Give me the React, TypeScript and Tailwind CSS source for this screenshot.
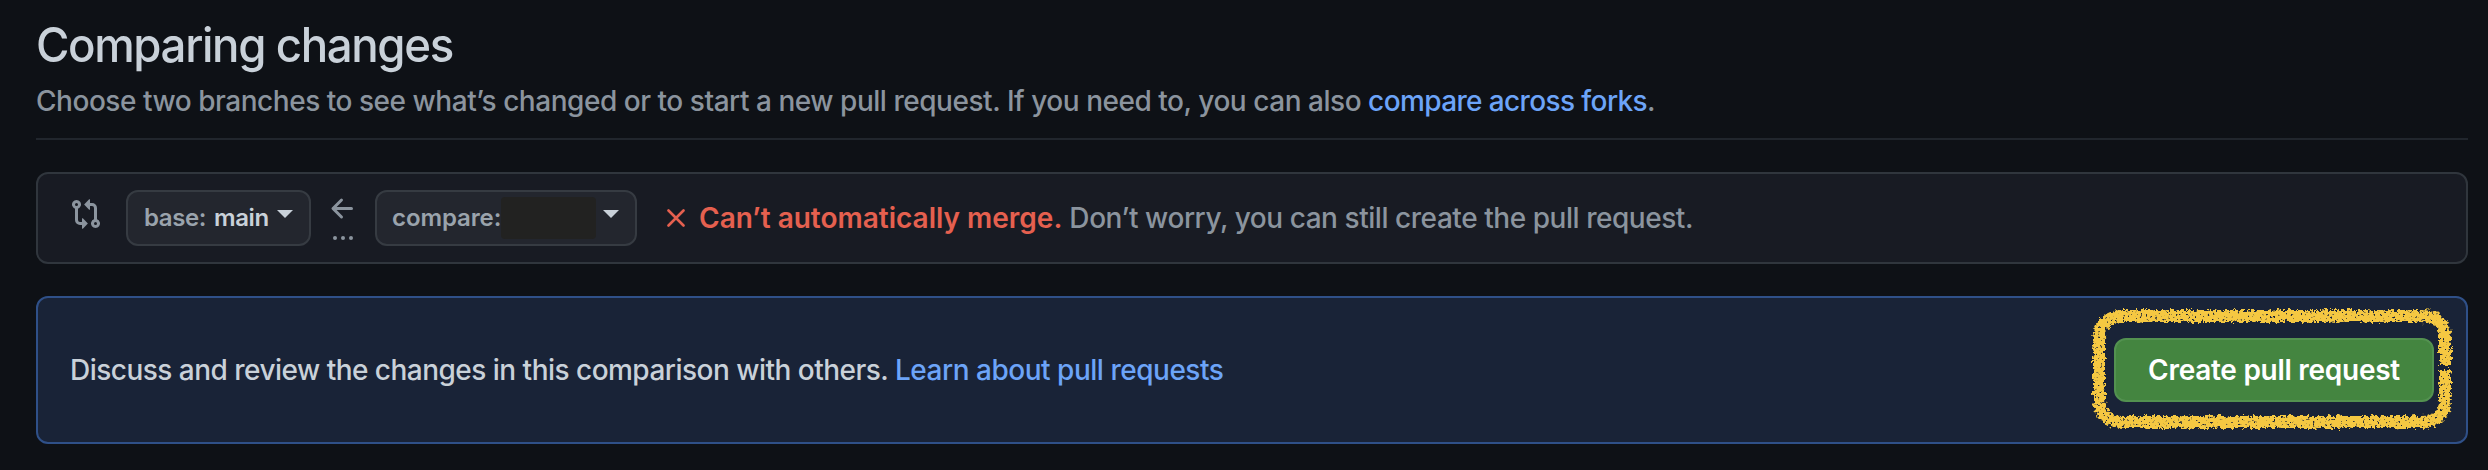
function Caret() {
  return <span className="h-0 w-0 border-x-8 border-t-8 border-x-transparent border-t-[#c9d1d9]" />;
}

function CompareIcon() {
  return (
    <svg viewBox="0 0 16 16" className="h-8 w-8 fill-[#8b949e]" aria-hidden="true">
      <path
        fillRule="evenodd"
        d="M9.573.677L7.177 3.073a.25.25 0 000 .354l2.396 2.396A.25.25 0 0010 5.646V4h1a1 1 0 011 1v5.628a2.251 2.251 0 101.5 0V5A2.5 2.5 0 0011 2.5h-1V.854a.25.25 0 00-.427-.177zM6 12v-1.646a.25.25 0 01.427-.177l2.396 2.396a.25.25 0 010 .354l-2.396 2.396A.25.25 0 016 15.146V13.5H5A2.5 2.5 0 012.5 11V5.372a2.25 2.25 0 111.5 0V11a1 1 0 001 1h1zM4 3.25a.75.75 0 10-1.5 0 .75.75 0 001.5 0zM12.75 12a.75.75 0 100 1.5.75.75 0 000-1.5z"
      />
    </svg>
  );
}

function ArrowLeftIcon() {
  return (
    <svg viewBox="0 0 16 16" className="h-8 w-8 fill-[#8b949e]" aria-hidden="true">
      <path d="M7.78 12.53a.75.75 0 01-1.06 0L2.47 8.28a.75.75 0 010-1.06l4.25-4.25a.75.75 0 011.06 1.06L4.81 7h7.44a.75.75 0 010 1.5H4.81l2.97 2.97a.75.75 0 010 1.06z" />
    </svg>
  );
}

function CrayonOutline() {
  return (
    <svg viewBox="0 0 370 130" className="pointer-events-none absolute -top-[34px] -left-[26px] h-[130px] w-[370px]" aria-hidden="true">
      <defs>
        <filter id="crayon" x="0" y="0" width="370" height="130" filterUnits="userSpaceOnUse">
          <feTurbulence type="fractalNoise" baseFrequency="0.3" numOctaves="3" seed="7" result="noise" />
          <feDisplacementMap in="SourceGraphic" in2="noise" scale="8" xChannelSelector="R" yChannelSelector="G" result="rough" />
          <feTurbulence type="fractalNoise" baseFrequency="0.4" numOctaves="2" seed="21" result="grain" />
          <feColorMatrix in="grain" type="matrix" values="0 0 0 0 0  0 0 0 0 0  0 0 0 0 0  0 0 0 -9 6.8" result="holes" />
          <feComposite in="rough" in2="holes" operator="in" />
        </filter>
      </defs>
      <path
        filter="url(#crayon)"
        fill="none"
        stroke="#f5c842"
        strokeWidth="12"
        d="M357 62V34Q357 12 333 12H35Q11 12 11 36V94Q11 118 35 118H333Q357 118 357 96V66"
      />
    </svg>
  );
}

export default function App() {
  return (
    <main className="h-[470px] bg-[#0e1116] pr-5 pl-9 font-['Inter','Liberation_Sans',sans-serif] text-[28px] leading-[42px] font-medium text-[#8b949e]">
      <header className="flex h-[140px] flex-col border-b-2 border-[#21262d] pt-[9px]">
        <h1 className="origin-left scale-x-95 text-[48px] leading-[72px] font-medium tracking-[-1.45px] text-[#c9d1d9]">Comparing changes</h1>
        <p className="-mt-px tracking-[-0.465px]">
          Choose two branches to see what’s changed or to start a new pull request. If you need to, you can also{" "}
          <a className="tracking-[-0.62px] text-[#6ca4f8]">compare across forks</a>.
        </p>
      </header>

      <section className="mt-8 flex h-[92px] items-center rounded-xl border-2 border-[#30363d] bg-[#181b23] pl-8">
        <div className="-mt-2">
          <CompareIcon />
        </div>
        <button className="ml-6 flex h-14 w-[185px] items-center rounded-xl border-2 border-[#363b42] bg-[#23262e] pl-4 text-2xl font-semibold tracking-[-0.4px]">
          <span className="text-[#9aa3ac]">base:</span>
          <span className="ml-2 text-[#c9d1d9]">main</span>
          <span className="-mt-2 ml-2 flex">
            <Caret />
          </span>
        </button>
        <div className="ml-4 flex h-14 w-8 flex-col">
          <div className="mt-[3px]">
            <ArrowLeftIcon />
          </div>
          <div className="mt-[11px] ml-1.5 flex gap-1">
            <span className="h-1 w-1 rounded-full bg-[#8b949e]" />
            <span className="h-1 w-1 rounded-full bg-[#8b949e]" />
            <span className="h-1 w-1 rounded-full bg-[#8b949e]" />
          </div>
        </div>
        <button className="ml-4 flex h-14 w-[262px] items-center rounded-xl border-2 border-[#363b42] bg-[#23262e] pl-[15px] text-2xl font-semibold tracking-[-0.1px]">
          <span className="text-[#9aa3ac]">compare:</span>
          <span className="h-[42px] w-[95px] rounded-sm bg-[#222221]" />
          <span className="-mt-2 ml-[7px] flex">
            <Caret />
          </span>
        </button>
        <svg viewBox="0 0 18 18" className="ml-[30px] h-[18px] w-[18px] stroke-[#e5604f]" fill="none" strokeWidth="2.6" strokeLinecap="round" aria-hidden="true">
          <path d="M1.5 1.5l15 15M16.5 1.5l-15 15" />
        </svg>
        <p className="ml-[14px] tracking-[-0.45px]">
          <strong className="font-semibold tracking-normal text-[#e5604f]">Can’t automatically merge.</strong> Don’t worry, you can still create the pull request.
        </p>
      </section>

      <section className="mt-8 flex h-[148px] items-center justify-between rounded-xl border-2 border-[#2f5088] bg-[#192337] pr-8 pl-8">
        <p className="tracking-[-0.52px] text-[#c9d1d9]">
          Discuss and review the changes in this comparison with others. <a className="tracking-[-0.48px] text-[#6ca4f8]">Learn about pull requests</a>
        </p>
        <div className="relative">
          <button className="h-16 w-80 rounded-xl border-2 border-[#539150] bg-[#448540] font-semibold tracking-[-0.28px] text-white">
            Create pull request
          </button>
          <CrayonOutline />
        </div>
      </section>
    </main>
  );
}
